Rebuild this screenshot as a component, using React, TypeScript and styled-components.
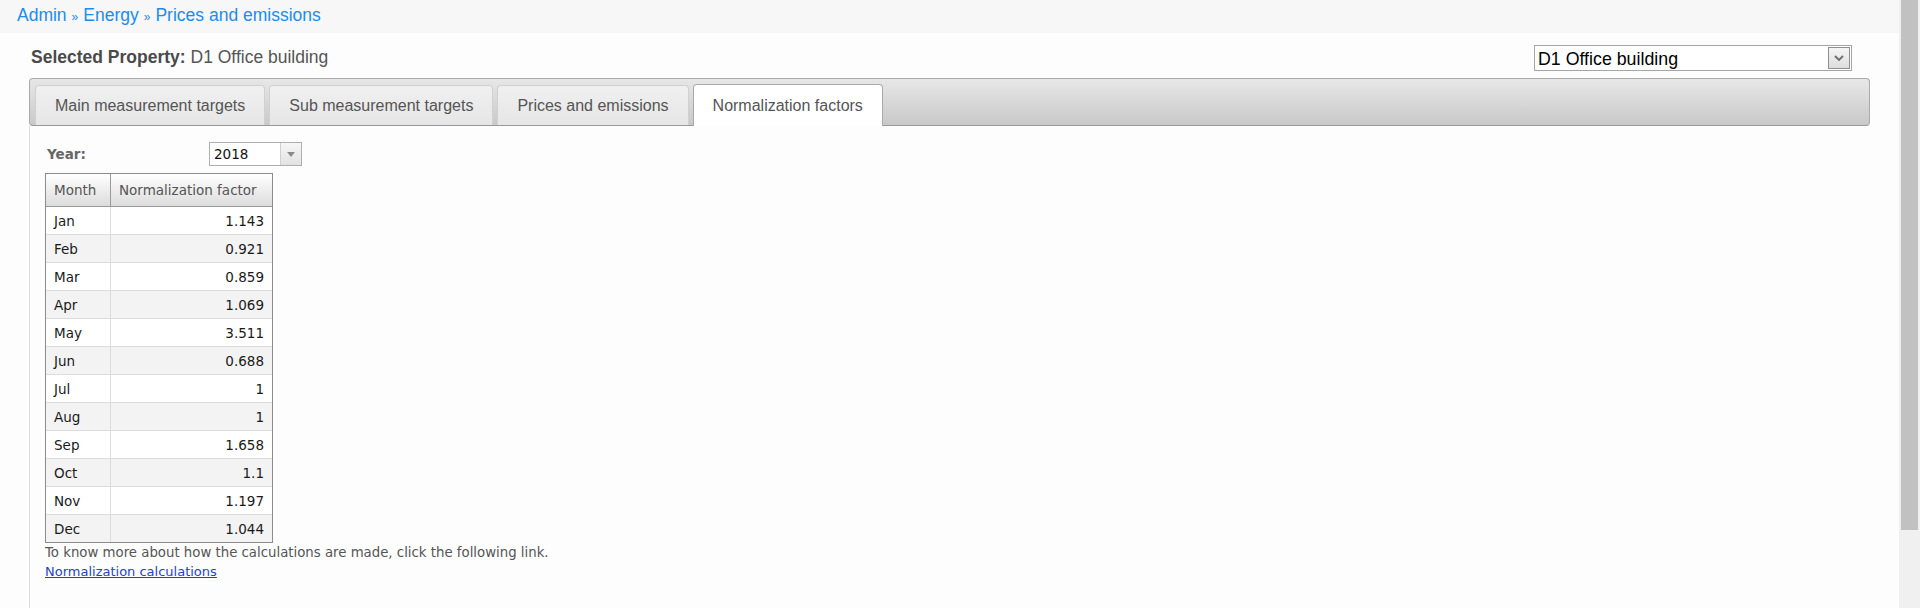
import { createGlobalStyle } from 'styled-components'
import styled from 'styled-components'

const months = [
  ['Jan', '1.143'],
  ['Feb', '0.921'],
  ['Mar', '0.859'],
  ['Apr', '1.069'],
  ['May', '3.511'],
  ['Jun', '0.688'],
  ['Jul', '1'],
  ['Aug', '1'],
  ['Sep', '1.658'],
  ['Oct', '1.1'],
  ['Nov', '1.197'],
  ['Dec', '1.044'],
]

const tabs = ['Main measurement targets', 'Sub measurement targets', 'Prices and emissions', 'Normalization factors']

const App = () => {
  return (
    <>
      <GlobalStyle />
      <Frame>
        <Page>
          <Breadcrumb>
            <Crumb href="#">Admin</Crumb>
            <Sep>»</Sep>
            <Crumb href="#">Energy</Crumb>
            <Sep>»</Sep>
            <Crumb href="#">Prices and emissions</Crumb>
          </Breadcrumb>

          <Content>
            <PropertyBar>
              <PropertyTitle>
                <b>Selected Property:</b> D1 Office building
              </PropertyTitle>
              <PropertySelect>
                <span>D1 Office building</span>
                <PropertyButton>
                  <svg width="10" height="6" viewBox="0 0 10 6">
                    <polyline points="1,1 5,5 9,1" fill="none" stroke="#6d6d6d" strokeWidth="1.8" />
                  </svg>
                </PropertyButton>
              </PropertySelect>
            </PropertyBar>

            <TabStrip>
              {tabs.map((t, i) => (
                <Tab key={t} $active={i === 3}>{t}</Tab>
              ))}
            </TabStrip>

            <Panel>
              <YearRow>
                <YearLabel>Year:</YearLabel>
                <YearSelect>
                  <span>2018</span>
                  <YearArrow>
                    <svg width="8" height="5" viewBox="0 0 8 5">
                      <polygon points="0,0 8,0 4,5" fill="#8a8a8a" />
                    </svg>
                  </YearArrow>
                </YearSelect>
              </YearRow>

              <Grid>
                <HeadRow>
                  <HeadCell>Month</HeadCell>
                  <HeadCell>Normalization factor</HeadCell>
                </HeadRow>
                {months.map(([m, v], i) => (
                  <Row key={m} $alt={i % 2 === 1} $last={i === months.length - 1}>
                    <Cell>{m}</Cell>
                    <Cell $num>{v}</Cell>
                  </Row>
                ))}
              </Grid>

              <Note>To know more about how the calculations are made, click the following link.</Note>
              <DocLink href="#">Normalization calculations</DocLink>
            </Panel>
          </Content>
        </Page>
        <ScrollTrack>
          <Thumb />
        </ScrollTrack>
      </Frame>
    </>
  )
}

const GlobalStyle = createGlobalStyle`
  html, body {
    margin: 0;
    padding: 0;
    overflow: hidden;
  }
  body {
    font-family: "Liberation Sans", Arial, sans-serif;
  }
`

const Frame = styled.div`
  display: flex;
  height: 608px;
  overflow: hidden;
`

const Page = styled.div`
  flex: 1;
  display: flex;
  flex-direction: column;
  background: #fdfdfd;
`

const Breadcrumb = styled.div`
  height: 33px;
  line-height: 30px;
  padding-left: 17px;
  background: #f7f7f7;
  font-size: 17.5px;
`

const Crumb = styled.a`
  color: #1a8cf0;
  text-decoration: none;
`

const Sep = styled.span`
  color: #1a8cf0;
  font-size: 12px;
  margin: 0 5px;
`

const Content = styled.div`
  flex: 1;
  display: flex;
  flex-direction: column;
  padding: 0 29px;
`

const PropertyBar = styled.div`
  display: flex;
  justify-content: space-between;
  align-items: flex-start;
  padding: 12px 18px 0 2px;
  margin-bottom: 7px;
`

const PropertyTitle = styled.div`
  margin-top: 2px;
  font-size: 17.5px;
  line-height: 20px;
  color: #555;

  b {
    color: #4a4a4a;
  }
`

const PropertySelect = styled.div`
  width: 312px;
  height: 24px;
  border: 1px solid #a5a5a5;
  background: #fff;
  display: flex;
  align-items: center;
  justify-content: space-between;
  padding: 0 1px 0 3px;
  font-size: 17.8px;
  color: #000;

  span {
    padding-top: 2px;
  }
`

const PropertyButton = styled.div`
  width: 20px;
  height: 20px;
  border: 1px solid #8f8f8f;
  background: linear-gradient(#f4f4f4, #dedede);
  display: flex;
  align-items: center;
  justify-content: center;
`

const TabStrip = styled.div`
  height: 46px;
  display: flex;
  align-items: flex-end;
  gap: 4px;
  padding-left: 5px;
  border: 1px solid #aaa;
  border-bottom-color: #999;
  border-radius: 4px;
  background: linear-gradient(#e7e7e7, #c9c9c9);
`

const Tab = styled.div<{ $active?: boolean }>`
  position: relative;
  z-index: 1;
  height: ${p => (p.$active ? 41 : 39)}px;
  margin-bottom: ${p => (p.$active ? -1 : 0)}px;
  padding: 0 19px;
  display: flex;
  align-items: center;
  border: 1px solid ${p => (p.$active ? '#aaa' : '#d0d0d0')};
  border-bottom: none;
  border-radius: 4px 4px 0 0;
  background: ${p => (p.$active ? '#fff' : 'linear-gradient(#f0f0f0, #e6e6e6)')};
  font-size: 16px;
  color: #555;
  white-space: nowrap;
`

const Panel = styled.div`
  flex: 1;
  border-left: 1px solid #dcdcdc;
  padding: 16px 0 0 15px;
  font-family: "DejaVu Sans", Verdana, sans-serif;
  font-size: 13.5px;
`

const YearRow = styled.div`
  display: flex;
  align-items: center;
  padding-left: 2px;
  margin-bottom: 7px;
`

const YearLabel = styled.div`
  width: 162px;
  font-weight: bold;
  color: #666;
`

const YearSelect = styled.div`
  width: 91px;
  height: 22px;
  border: 1px solid #aeaeae;
  background: #fff;
  display: flex;
  align-items: center;
  justify-content: space-between;
  color: #111;

  span {
    padding-left: 4px;
  }
`

const YearArrow = styled.div`
  width: 20px;
  height: 22px;
  border-left: 1px solid #cfcfcf;
  background: linear-gradient(#f6f6f6, #e2e2e2);
  display: flex;
  align-items: center;
  justify-content: center;
`

const Grid = styled.div`
  width: 226px;
  border: 1px solid #8c8c8c;
`

const HeadRow = styled.div`
  display: grid;
  grid-template-columns: 65px 1fr;
  height: 32px;
  border-bottom: 1px solid #999;
  background: linear-gradient(#ffffff, #dcdcdc);
`

const HeadCell = styled.div`
  display: flex;
  align-items: center;
  padding-left: 8px;
  color: #555;

  &:first-child {
    border-right: 1px solid #9a9a9a;
  }
`

const Row = styled.div<{ $alt?: boolean; $last?: boolean }>`
  display: grid;
  grid-template-columns: 65px 1fr;
  height: 27px;
  border-bottom: ${p => (p.$last ? 'none' : '1px solid #dcdcdc')};
  background: ${p => (p.$alt ? '#f3f3f3' : '#fff')};
`

const Cell = styled.div<{ $num?: boolean }>`
  display: flex;
  align-items: center;
  justify-content: ${p => (p.$num ? 'flex-end' : 'flex-start')};
  padding: ${p => (p.$num ? '0 8px 0 0' : '0 0 0 8px')};
  color: #1a1a1a;

  &:first-child {
    border-right: 1px solid #dcdcdc;
  }
`

const Note = styled.div`
  line-height: 19px;
  font-size: 13.3px;
  color: #555;
`

const DocLink = styled.a`
  display: inline-block;
  line-height: 19px;
  font-size: 13px;
  color: #1d43c9;
  text-decoration: underline;
`

const ScrollTrack = styled.div`
  width: 17px;
  padding: 0 2px;
  background: #f0f0f0;
`

const Thumb = styled.div`
  height: 530px;
  background: #c1c1c1;
`

export default App
